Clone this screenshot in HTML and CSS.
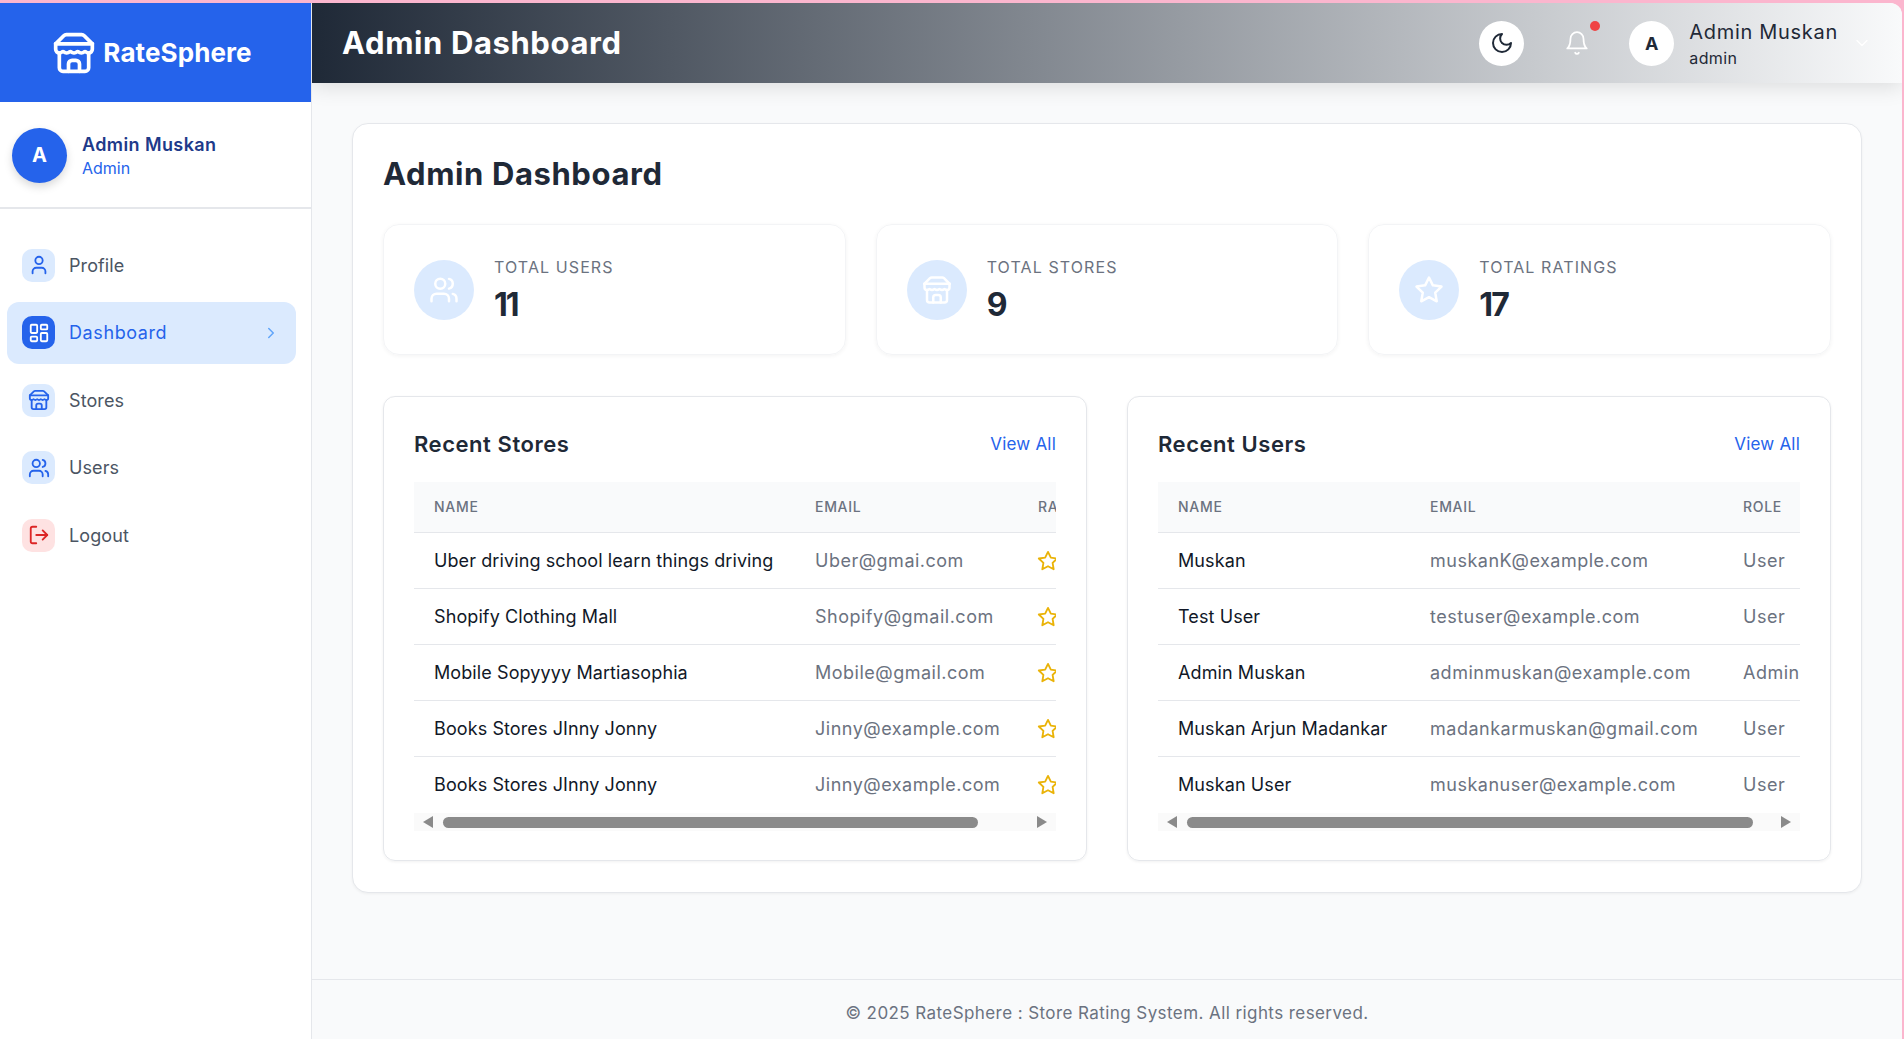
FILE: index.html
```html
<!DOCTYPE html>
<html lang="en">
<head>
    <meta charset="UTF-8">
    <meta name="viewport" content="width=device-width, initial-scale=1.0">
    <title>RateSphere - Admin Dashboard</title>
    <link rel="stylesheet" href="styles.css">
</head>
<body>
    <!-- icon set -->
    <svg class="sprite" xmlns="http://www.w3.org/2000/svg">
        <symbol id="i-store" viewBox="0 0 24 24"><path d="m2 7 4.41-4.41A2 2 0 0 1 7.83 2h8.34a2 2 0 0 1 1.42.59L22 7"/><path d="M4 12v8a2 2 0 0 0 2 2h12a2 2 0 0 0 2-2v-8"/><path d="M15 22v-4a2 2 0 0 0-2-2h-2a2 2 0 0 0-2 2v4"/><path d="M2 7h20"/><path d="M22 7v3a2 2 0 0 1-2 2a2.7 2.7 0 0 1-1.59-.63.7.7 0 0 0-.82 0A2.7 2.7 0 0 1 16 12a2.7 2.7 0 0 1-1.59-.63.7.7 0 0 0-.82 0A2.7 2.7 0 0 1 12 12a2.7 2.7 0 0 1-1.59-.63.7.7 0 0 0-.82 0A2.7 2.7 0 0 1 8 12a2.7 2.7 0 0 1-1.59-.63.7.7 0 0 0-.82 0A2.7 2.7 0 0 1 4 12a2 2 0 0 1-2-2V7"/></symbol>
        <symbol id="i-user" viewBox="0 0 24 24"><path d="M19 21v-2a4 4 0 0 0-4-4H9a4 4 0 0 0-4 4v2"/><circle cx="12" cy="7" r="4"/></symbol>
        <symbol id="i-dashboard" viewBox="0 0 24 24"><rect x="3" y="3" width="7" height="9" rx="1"/><rect x="14" y="3" width="7" height="5" rx="1"/><rect x="14" y="12" width="7" height="9" rx="1"/><rect x="3" y="16" width="7" height="5" rx="1"/></symbol>
        <symbol id="i-users" viewBox="0 0 24 24"><path d="M16 21v-2a4 4 0 0 0-4-4H6a4 4 0 0 0-4 4v2"/><circle cx="9" cy="7" r="4"/><path d="M22 21v-2a4 4 0 0 0-3-3.87"/><path d="M16 3.13a4 4 0 0 1 0 7.75"/></symbol>
        <symbol id="i-logout" viewBox="0 0 24 24"><path d="M9 21H5a2 2 0 0 1-2-2V5a2 2 0 0 1 2-2h4"/><polyline points="16 17 21 12 16 7"/><line x1="21" y1="12" x2="9" y2="12"/></symbol>
        <symbol id="i-chevron-right" viewBox="0 0 24 24"><path d="m9 18 6-6-6-6"/></symbol>
        <symbol id="i-chevron-down" viewBox="0 0 24 24"><path d="m6 9 6 6 6-6"/></symbol>
        <symbol id="i-moon" viewBox="0 0 24 24"><path d="M12 3a6 6 0 0 0 9 9 9 9 0 1 1-9-9Z"/></symbol>
        <symbol id="i-bell" viewBox="0 0 24 24"><path d="M6 8a6 6 0 0 1 12 0c0 7 3 9 3 9H3s3-2 3-9"/><path d="M10.3 21a1.94 1.94 0 0 0 3.4 0"/></symbol>
        <symbol id="i-star" viewBox="0 0 24 24"><polygon points="12 2 15.09 8.26 22 9.27 17 14.14 18.18 21.02 12 17.77 5.82 21.02 7 14.14 2 9.27 8.91 8.26 12 2"/></symbol>
    </svg>

    <div class="app">
        <aside class="sidebar">
            <div class="brand">
                <svg class="icon brand-icon"><use href="#i-store"/></svg>
                <span class="brand-name">RateSphere</span>
            </div>
            <div class="side-user">
                <div class="side-avatar">A</div>
                <div>
                    <div class="side-user-name">Admin Muskan</div>
                    <div class="side-user-role">Admin</div>
                </div>
            </div>
            <nav class="nav">
                <a class="nav-item" href="#"><span class="nav-icon"><svg class="icon"><use href="#i-user"/></svg></span>Profile</a>
                <a class="nav-item active" href="#"><span class="nav-icon"><svg class="icon"><use href="#i-dashboard"/></svg></span>Dashboard<svg class="icon nav-arrow"><use href="#i-chevron-right"/></svg></a>
                <a class="nav-item" href="#"><span class="nav-icon"><svg class="icon"><use href="#i-store"/></svg></span>Stores</a>
                <a class="nav-item" href="#"><span class="nav-icon"><svg class="icon"><use href="#i-users"/></svg></span>Users</a>
                <a class="nav-item logout" href="#"><span class="nav-icon"><svg class="icon"><use href="#i-logout"/></svg></span>Logout</a>
            </nav>
        </aside>

        <div class="main">
            <header class="topbar">
                <div class="topbar-title">Admin Dashboard</div>
                <div class="topbar-right">
                    <button class="theme-btn"><svg class="icon"><use href="#i-moon"/></svg></button>
                    <div class="bell">
                        <svg class="icon"><use href="#i-bell"/></svg>
                        <span class="bell-dot"></span>
                    </div>
                    <div class="top-avatar">A</div>
                    <div class="top-user">
                        <div class="top-user-name">Admin Muskan</div>
                        <div class="top-user-role">admin</div>
                    </div>
                    <svg class="icon top-chevron"><use href="#i-chevron-down"/></svg>
                </div>
            </header>

            <main class="content">
                <div class="panel">
                    <h1>Admin Dashboard</h1>

                    <div class="stats">
                        <div class="stat-card">
                            <div class="stat-icon"><svg class="icon"><use href="#i-users"/></svg></div>
                            <div>
                                <div class="stat-label">Total Users</div>
                                <div class="stat-value">11</div>
                            </div>
                        </div>
                        <div class="stat-card">
                            <div class="stat-icon"><svg class="icon"><use href="#i-store"/></svg></div>
                            <div>
                                <div class="stat-label">Total Stores</div>
                                <div class="stat-value">9</div>
                            </div>
                        </div>
                        <div class="stat-card">
                            <div class="stat-icon"><svg class="icon"><use href="#i-star"/></svg></div>
                            <div>
                                <div class="stat-label">Total Ratings</div>
                                <div class="stat-value">17</div>
                            </div>
                        </div>
                    </div>

                    <div class="recent">
                        <section class="recent-card">
                            <div class="recent-head">
                                <h2>Recent Stores</h2>
                                <a class="view-all" href="#">View All</a>
                            </div>
                            <div class="table-wrap">
                                <table class="stores-table">
                                    <thead>
                                        <tr><th class="col-a">Name</th><th class="col-b">Email</th><th class="col-c">Rating</th></tr>
                                    </thead>
                                    <tbody>
                                        <tr><td>Uber driving school learn things driving</td><td class="muted">Uber@gmai.com</td><td><svg class="icon star"><use href="#i-star"/></svg></td></tr>
                                        <tr><td>Shopify Clothing Mall</td><td class="muted">Shopify@gmail.com</td><td><svg class="icon star"><use href="#i-star"/></svg></td></tr>
                                        <tr><td>Mobile Sopyyyy Martiasophia</td><td class="muted">Mobile@gmail.com</td><td><svg class="icon star"><use href="#i-star"/></svg></td></tr>
                                        <tr><td>Books Stores JInny Jonny</td><td class="muted">Jinny@example.com</td><td><svg class="icon star"><use href="#i-star"/></svg></td></tr>
                                        <tr><td>Books Stores JInny Jonny</td><td class="muted">Jinny@example.com</td><td><svg class="icon star"><use href="#i-star"/></svg></td></tr>
                                    </tbody>
                                </table>
                            </div>
                            <div class="scrollbar">
                                <span class="arrow arrow-left"></span>
                                <div class="scroll-track"><div class="thumb thumb-stores"></div></div>
                                <span class="arrow arrow-right"></span>
                            </div>
                        </section>

                        <section class="recent-card">
                            <div class="recent-head">
                                <h2>Recent Users</h2>
                                <a class="view-all" href="#">View All</a>
                            </div>
                            <div class="table-wrap">
                                <table class="users-table">
                                    <thead>
                                        <tr><th class="col-a">Name</th><th class="col-b">Email</th><th class="col-c">Role</th></tr>
                                    </thead>
                                    <tbody>
                                        <tr><td>Muskan</td><td class="muted">muskanK@example.com</td><td class="muted">User</td></tr>
                                        <tr><td>Test User</td><td class="muted">testuser@example.com</td><td class="muted">User</td></tr>
                                        <tr><td>Admin Muskan</td><td class="muted">adminmuskan@example.com</td><td class="muted">Admin</td></tr>
                                        <tr><td>Muskan Arjun Madankar</td><td class="muted">madankarmuskan@gmail.com</td><td class="muted">User</td></tr>
                                        <tr><td>Muskan User</td><td class="muted">muskanuser@example.com</td><td class="muted">User</td></tr>
                                    </tbody>
                                </table>
                            </div>
                            <div class="scrollbar">
                                <span class="arrow arrow-left"></span>
                                <div class="scroll-track"><div class="thumb thumb-users"></div></div>
                                <span class="arrow arrow-right"></span>
                            </div>
                        </section>
                    </div>
                </div>
            </main>

            <footer class="footer">© 2025 RateSphere : Store Rating System. All rights reserved.</footer>
        </div>
    </div>
</body>
</html>
```

FILE: styles.css
```css
* {
    box-sizing: border-box;
    margin: 0;
    padding: 0;
}

:root {
    --blue: #2563eb;
    --blue-light: #dbeafe;
    --dark: #1f2937;
    --grey: #6b7280;
    --line: #e5e7eb;
}

body {
    font-family: Inter, "Noto Sans", sans-serif;
    background: #fbb6ce;
    height: 100vh;
    padding: 3px 2px 0 0;
    overflow: hidden;
    color: var(--dark);
}

a {
    text-decoration: none;
}

.sprite {
    display: none;
}

.icon {
    width: 22px;
    height: 22px;
    fill: none;
    stroke: currentColor;
    stroke-width: 2;
    stroke-linecap: round;
    stroke-linejoin: round;
    flex-shrink: 0;
}

.app {
    display: flex;
    height: 100%;
}

/* sidebar */
.sidebar {
    width: 312px;
    flex-shrink: 0;
    background: #fff;
    border-right: 1px solid var(--line);
}

.brand {
    height: 99px;
    background: var(--blue);
    color: #fff;
    display: flex;
    align-items: center;
    justify-content: center;
    gap: 7px;
    padding-right: 7px;
}

.brand-icon {
    width: 44px;
    height: 44px;
}

.brand-name {
    font-size: 26px;
    font-weight: 700;
    letter-spacing: 0.1px;
}

.side-user {
    height: 107px;
    display: flex;
    align-items: center;
    gap: 15px;
    padding: 0 12px 1px;
    border-bottom: 2px solid var(--line);
}

.side-avatar {
    width: 55px;
    height: 55px;
    margin-top: 2px;
    border-radius: 50%;
    background: var(--blue);
    color: #fff;
    font-size: 20px;
    font-weight: 700;
    display: flex;
    align-items: center;
    justify-content: center;
    box-shadow: 0 4px 8px rgba(0, 0, 0, 0.15);
}

.side-user-name {
    font-size: 18px;
    font-weight: 600;
    line-height: 29px;
    letter-spacing: 0.4px;
    color: #1e3a8a;
}

.side-user-role {
    font-size: 16px;
    line-height: 20px;
    margin-top: -1px;
    color: var(--blue);
}

.nav {
    display: flex;
    flex-direction: column;
    gap: 5.5px;
    padding: 25px 15px 0 7px;
}

.nav-item {
    height: 62px;
    display: flex;
    align-items: center;
    gap: 14px;
    padding: 0 15px;
    border-radius: 12px;
    font-size: 18px;
    letter-spacing: 0.1px;
    color: #4b5563;
}

.nav-icon {
    width: 33px;
    height: 33px;
    border-radius: 10px;
    background: var(--blue-light);
    color: var(--blue);
    display: flex;
    align-items: center;
    justify-content: center;
}

.nav-item.active {
    background: var(--blue-light);
    color: var(--blue);
    letter-spacing: 0.6px;
}

.nav-item.active .nav-icon {
    background: var(--blue);
    color: #fff;
}

.nav-arrow {
    width: 18px;
    height: 18px;
    margin-left: auto;
    margin-right: 1px;
    color: #60a5fa;
}

.nav-item.logout .nav-icon {
    background: #fee2e2;
    color: #dc2626;
}

/* main area */
.main {
    flex: 1;
    min-width: 0;
    display: flex;
    flex-direction: column;
    background: #f9fafb;
    border-top-right-radius: 12px;
    overflow: hidden;
}

.topbar {
    height: 80px;
    flex-shrink: 0;
    display: flex;
    align-items: center;
    justify-content: space-between;
    padding: 0 30px;
    background: linear-gradient(to right, #1f2937, #f9fafb);
    box-shadow: 0 4px 20px rgba(0, 0, 0, 0.12);
    position: relative;
}

.topbar-title {
    font-size: 31px;
    font-weight: 700;
    letter-spacing: 0.6px;
    margin-bottom: 2px;
    color: #fff;
}

.topbar-right {
    display: flex;
    align-items: center;
}

.theme-btn {
    width: 45px;
    height: 45px;
    border: none;
    border-radius: 50%;
    background: #fff;
    color: var(--dark);
    display: flex;
    align-items: center;
    justify-content: center;
}

.theme-btn .icon {
    width: 24px;
    height: 24px;
}

.bell {
    position: relative;
    width: 26px;
    height: 26px;
    margin: 0 39px 0 40px;
    color: #fff;
}

.bell .icon {
    width: 26px;
    height: 26px;
    stroke-width: 1.6;
}

.bell-dot {
    position: absolute;
    top: -9px;
    right: -10px;
    width: 10px;
    height: 10px;
    border-radius: 50%;
    background: #ef4444;
}

.top-avatar {
    width: 45px;
    height: 45px;
    border-radius: 50%;
    background: #fff;
    font-size: 18px;
    font-weight: 700;
    display: flex;
    align-items: center;
    justify-content: center;
}

.top-user {
    margin-left: 15px;
}

.top-user-name {
    font-size: 20px;
    line-height: 31px;
    letter-spacing: 0.7px;
}

.top-user-role {
    font-size: 16px;
    line-height: 21px;
    letter-spacing: 0.4px;
}

.top-chevron {
    width: 20px;
    height: 20px;
    margin-left: 14px;
    color: #fff;
    stroke-width: 1.5;
}

.content {
    flex: 1;
    padding: 40px 40px 0;
}

.panel {
    height: 770px;
    background: #fff;
    border: 1px solid var(--line);
    border-radius: 16px;
    padding: 30px;
    box-shadow: 0 1px 3px rgba(0, 0, 0, 0.05);
}

h1 {
    font-size: 31px;
    font-weight: 700;
    line-height: 45px;
    letter-spacing: 0.6px;
    margin: -3px 0 28px;
}

/* stat cards */
.stats {
    display: grid;
    grid-template-columns: repeat(3, minmax(0, 1fr));
    gap: 30px;
    margin-bottom: 41px;
}

.stat-card {
    height: 131px;
    display: flex;
    align-items: center;
    gap: 20px;
    padding: 0 30px;
    border: 1px solid #f3f4f6;
    border-radius: 16px;
    box-shadow: 0 1px 4px rgba(0, 0, 0, 0.05);
}

.stat-icon {
    width: 60px;
    height: 60px;
    border-radius: 50%;
    background: var(--blue-light);
    color: #fff;
    display: flex;
    align-items: center;
    justify-content: center;
}

.stat-icon .icon {
    width: 30px;
    height: 30px;
}

.stat-label {
    font-size: 16px;
    line-height: 24px;
    letter-spacing: 1.1px;
    margin-top: 3px;
    text-transform: uppercase;
    color: var(--grey);
}

.stat-value {
    font-size: 32px;
    font-weight: 700;
    line-height: 45px;
    margin-top: 3px;
    letter-spacing: -2px;
}

/* recent lists */
.recent {
    display: grid;
    grid-template-columns: repeat(2, minmax(0, 1fr));
    gap: 40px;
}

.recent-card {
    height: 465px;
    border: 1px solid var(--line);
    border-radius: 12px;
    padding: 30px;
    box-shadow: 0 1px 3px rgba(0, 0, 0, 0.06);
}

.recent-head {
    display: flex;
    align-items: center;
    justify-content: space-between;
    height: 33px;
    margin-bottom: 22px;
}

h2 {
    font-size: 22px;
    font-weight: 600;
    letter-spacing: 0.55px;
}

.view-all {
    font-size: 17px;
    letter-spacing: 0.2px;
    color: var(--blue);
}

.table-wrap {
    overflow: hidden;
}

table {
    border-spacing: 0;
    table-layout: fixed;
}

th {
    height: 51px;
    padding: 0 20px 1px;
    text-align: left;
    font-size: 14px;
    font-weight: 500;
    letter-spacing: 0.7px;
    text-transform: uppercase;
    color: var(--grey);
    background: #f9fafb;
    border-bottom: 1px solid var(--line);
    white-space: nowrap;
}

td {
    height: 56px;
    padding: 0 20px;
    font-size: 18px;
    letter-spacing: 0.1px;
    color: #111827;
    border-bottom: 1px solid var(--line);
    white-space: nowrap;
}

tbody tr:last-child td {
    padding-bottom: 1px;
    border-bottom: none;
}

td.muted {
    letter-spacing: 0.5px;
    color: var(--grey);
}

.stores-table {
    width: 764px;
}

.stores-table .col-a {
    width: 381px;
}

.stores-table .col-b {
    width: 223px;
}

.users-table {
    width: 685px;
}

.users-table .col-a {
    width: 252px;
}

.users-table .col-b {
    width: 313px;
}

.star {
    display: block;
    margin-left: -1px;
    color: #eab308;
}

/* drawn scrollbar, the tables are clipped */
.scrollbar {
    height: 18px;
    display: flex;
    align-items: center;
    gap: 10px;
    padding: 0 9px 0 9px;
    background: #fafafa;
}

.scroll-track {
    flex: 1;
}

.thumb {
    height: 11px;
    border-radius: 6px;
    background: #8a8a8a;
}

.thumb-stores {
    width: 535px;
}

.thumb-users {
    width: 566px;
}

.arrow {
    width: 0;
    height: 0;
    border-top: 6px solid transparent;
    border-bottom: 6px solid transparent;
}

.arrow-left {
    border-right: 10px solid #8a8a8a;
}

.arrow-right {
    border-left: 10px solid #8a8a8a;
}

.footer {
    height: 60px;
    flex-shrink: 0;
    border-top: 1px solid var(--line);
    padding-top: 6px;
    display: flex;
    align-items: center;
    justify-content: center;
    font-size: 17px;
    letter-spacing: 0.42px;
    color: var(--grey);
}
```
